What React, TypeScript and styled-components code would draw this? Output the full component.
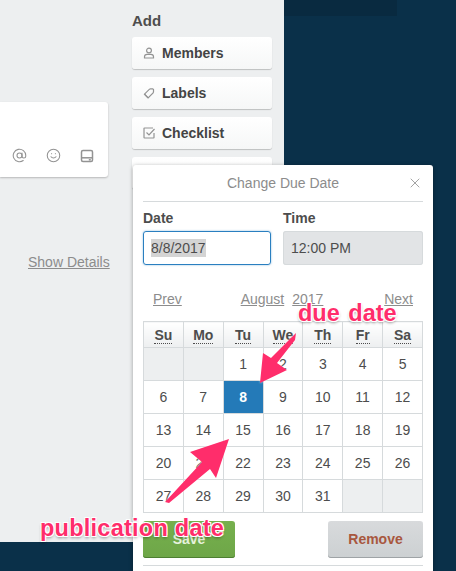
import styled, { createGlobalStyle } from "styled-components";
import { AtSign, Smile, X } from "lucide-react";

const GlobalStyle = createGlobalStyle`
  html, body {
    margin: 0;
    padding: 0;
    background: #0a3049;
    font-family: "Liberation Sans", Arial, sans-serif;
  }
`;

const weeks: (number | null)[][] = [
  [null, null, 1, 2, 3, 4, 5],
  [6, 7, 8, 9, 10, 11, 12],
  [13, 14, 15, 16, 17, 18, 19],
  [20, 21, 22, 23, 24, 25, 26],
  [27, 28, 29, 30, 31, null, null],
];
const days = ["Su", "Mo", "Tu", "We", "Th", "Fr", "Sa"];

export default function App() {
  return (
    <Page>
      <GlobalStyle />
      <Sheet>
        <MainColumn>
          <CommentBox>
            <CommentIcons>
              <AtSign size={15} strokeWidth={1.7} />
              <Smile size={15} strokeWidth={1.7} />
              <svg width="14" height="14" viewBox="0 0 14 14" fill="none" stroke="currentColor" strokeWidth="1.5">
                <rect x="1.5" y="1.5" width="11" height="11" rx="1.5" />
                <path d="M1.5 8.8h11" />
                <path d="M8.8 10.8h2" />
              </svg>
            </CommentIcons>
          </CommentBox>
          <ShowDetails>Show Details</ShowDetails>
        </MainColumn>
        <SideColumn>
          <SideTitle>Add</SideTitle>
          <SideButton>
            <svg width="12" height="12" viewBox="0 0 12 12" fill="none" stroke="currentColor" strokeWidth="1.2">
              <circle cx="6" cy="3.5" r="2.4" />
              <path d="M1.5 11v-1.2c0-1.4 1.2-2.4 2.6-2.4h3.8c1.4 0 2.6 1 2.6 2.4V11z" />
            </svg>
            Members
          </SideButton>
          <SideButton>
            <svg width="12" height="12" viewBox="0 0 12 12" fill="none" stroke="currentColor" strokeWidth="1.2">
              <path d="M1.5 7.2l5-5 1-.4h2.2l.8.8V4.8l-.4 1-5 5z" />
              <path d="M1.5 7.2l3.6 3.6" />
            </svg>
            Labels
          </SideButton>
          <SideButton>
            <svg width="12" height="12" viewBox="0 0 12 12" fill="none" stroke="currentColor" strokeWidth="1.2">
              <path d="M11 6v4.5a.5.5 0 0 1-.5.5h-9a.5.5 0 0 1-.5-.5v-9a.5.5 0 0 1 .5-.5H10" />
              <path d="M3.5 5.5L6 8l5.5-6" />
            </svg>
            Checklist
          </SideButton>
          <SideButton />
        </SideColumn>
      </Sheet>
      <TopStrip />

      <Popover>
        <PopHeader>
          Change Due Date
          <CloseIcon>
            <X size={16} strokeWidth={1.2} />
          </CloseIcon>
        </PopHeader>
        <Fields>
          <Field>
            <FieldLabel>Date</FieldLabel>
            <DateInput>
              <Selected>8/8/2017</Selected>
            </DateInput>
          </Field>
          <Field>
            <FieldLabel>Time</FieldLabel>
            <TimeInput>12:00 PM</TimeInput>
          </Field>
        </Fields>
        <CalNav>
          <NavLink>Prev</NavLink>
          <MonthYear>
            <NavLink>August</NavLink>
            <NavLink>2017</NavLink>
          </MonthYear>
          <NavLink>Next</NavLink>
        </CalNav>
        <Calendar>
          <thead>
            <tr>
              {days.map((d) => (
                <HeadCell key={d}>
                  <Abbr>{d}</Abbr>
                </HeadCell>
              ))}
            </tr>
          </thead>
          <tbody>
            {weeks.map((week, i) => (
              <tr key={i}>
                {week.map((n, j) => (
                  <DayCell key={j} $empty={n === null} $active={n === 8}>
                    {n}
                  </DayCell>
                ))}
              </tr>
            ))}
          </tbody>
        </Calendar>
        <Actions>
          <SaveButton>Save</SaveButton>
          <RemoveButton>Remove</RemoveButton>
        </Actions>
        <BottomRule />
      </Popover>

      <Arrows width="456" height="571" viewBox="0 0 456 571">
        <polygon
          fill="#ff2d6b"
          points="260,383 263,353 271,358 296,333 295,340 277,363 287,370"
        />
        <polygon
          fill="#ff2d6b"
          points="229,439 190,452 202,462 165,502 169,503 210,469 216,478"
        />
      </Arrows>
      <DueNote>due date</DueNote>
      <PublicationNote>publication date</PublicationNote>
    </Page>
  );
}

const Page = styled.div`
  position: relative;
  width: 456px;
  height: 571px;
  overflow: hidden;
  background: #0a3049;
`;

const Sheet = styled.div`
  display: flex;
  width: 284px;
  height: 542px;
  background: #edeff0;
`;

const TopStrip = styled.div`
  position: absolute;
  left: 284px;
  top: 0;
  width: 113px;
  height: 16px;
  background: #092a40;
`;

const MainColumn = styled.div`
  width: 108px;
  padding-top: 102px;
  margin-right: 24px;
`;

const CommentBox = styled.div`
  display: flex;
  align-items: flex-end;
  justify-content: flex-end;
  height: 75px;
  padding: 0 14px 14px 0;
  box-sizing: border-box;
  background: #fff;
  border-radius: 0 3px 3px 0;
  box-shadow: 0 1px 2px rgba(0, 0, 0, 0.23);
`;

const CommentIcons = styled.div`
  display: flex;
  align-items: center;
  gap: 19px;
  color: #939393;
`;

const ShowDetails = styled.div`
  margin: 76px 0 0 28px;
  width: 82px;
  font-size: 14px;
  line-height: 18px;
  color: #8c8c8c;
  text-decoration: underline;
  white-space: nowrap;
`;

const SideColumn = styled.div`
  display: flex;
  flex-direction: column;
  gap: 8px;
  width: 140px;
  padding-top: 12px;
`;

const SideTitle = styled.div`
  height: 17px;
  font-size: 15px;
  font-weight: 700;
  line-height: 17px;
  color: #4d4d4d;
`;

const SideButton = styled.div`
  display: flex;
  align-items: center;
  gap: 7px;
  height: 32px;
  padding-left: 11px;
  box-sizing: border-box;
  font-size: 14px;
  font-weight: 700;
  color: #444;
  background: linear-gradient(#ffffff, #f6f7f7);
  border-radius: 3px;
  box-shadow: 0 1px 1px rgba(0, 0, 0, 0.2);

  svg {
    color: #939393;
  }
`;

const Popover = styled.div`
  position: absolute;
  left: 133px;
  top: 165px;
  width: 300px;
  height: 420px;
  padding: 0 10px;
  box-sizing: border-box;
  background: #fff;
  border-radius: 3px;
  box-shadow: 0 1px 4px rgba(0, 0, 0, 0.35);
`;

const PopHeader = styled.div`
  position: relative;
  height: 36px;
  font-size: 14px;
  line-height: 36px;
  text-align: center;
  color: #8c8c8c;
  border-bottom: 1px solid #d6dadc;
`;

const CloseIcon = styled.span`
  position: absolute;
  right: 0;
  top: 10px;
  display: flex;
  color: #8c8c8c;
`;

const Fields = styled.div`
  display: flex;
  gap: 12px;
  margin-top: 8px;
`;

const Field = styled.div`
  display: flex;
  flex: 1 1 0;
  flex-direction: column;
  gap: 5px;

  &:last-child {
    flex: 0 0 140px;
  }
`;

const FieldLabel = styled.div`
  font-size: 14px;
  font-weight: 700;
  line-height: 16px;
  color: #4d4d4d;
`;

const DateInput = styled.div`
  height: 34px;
  padding-left: 7px;
  box-sizing: border-box;
  font-size: 14px;
  line-height: 32px;
  color: #4d4d4d;
  border: 1px solid #2a7fc0;
  border-radius: 3px;
  box-shadow: 0 0 2px rgba(42, 127, 192, 0.6);
`;

const Selected = styled.span`
  background: #d4d4d4;
  padding: 1px 0;
`;

const TimeInput = styled.div`
  height: 34px;
  padding-left: 8px;
  box-sizing: border-box;
  font-size: 14px;
  line-height: 34px;
  color: #4d4d4d;
  background: #e2e4e6;
  border-radius: 3px;
  box-shadow: inset 0 0 0 1px #d6dadc;
`;

const CalNav = styled.div`
  display: flex;
  align-items: center;
  justify-content: space-between;
  height: 18px;
  margin-top: 25px;
  padding: 0 10px;
`;

const MonthYear = styled.div`
  display: flex;
  gap: 8px;
  margin-right: 2px;
`;

const NavLink = styled.span`
  font-size: 14px;
  line-height: 18px;
  color: #8c8c8c;
  text-decoration: underline;
`;

const Calendar = styled.table`
  width: 280px;
  margin-top: 13px;
  table-layout: fixed;
  border-collapse: collapse;
  border: 1px solid #d6dadc;
`;

const HeadCell = styled.th`
  height: 25px;
  padding: 0;
  font-size: 14px;
  font-weight: 700;
  color: #4d4d4d;
  background: linear-gradient(#ffffff, #edeff0);
  border: 1px solid #d6dadc;
`;

const Abbr = styled.span`
  border-bottom: 1px dotted #4d4d4d;
`;

const DayCell = styled.td<{ $empty: boolean; $active: boolean }>`
  height: 32px;
  padding: 0;
  font-size: 14px;
  font-weight: ${(p) => (p.$active ? 700 : 400)};
  text-align: center;
  color: ${(p) => (p.$active ? "#fff" : "#4d4d4d")};
  background: ${(p) => (p.$active ? "#247ab8" : p.$empty ? "#edeff0" : "#fff")};
  border: 1px solid #d6dadc;
`;

const Actions = styled.div`
  display: flex;
  justify-content: space-between;
  margin-top: 8px;
`;

const ActionButton = styled.div`
  height: 37px;
  font-size: 14px;
  font-weight: 700;
  line-height: 36px;
  text-align: center;
  border-radius: 3px;
`;

const SaveButton = styled(ActionButton)`
  width: 92px;
  color: #e6f2dd;
  background: linear-gradient(#76b04d, #6ea648);
  box-shadow: inset 0 -1px 0 #4d7f32;
`;

const RemoveButton = styled(ActionButton)`
  width: 95px;
  color: #a8573e;
  background: linear-gradient(#d8dadc, #ccd0d2);
  box-shadow: inset 0 -1px 0 #9ea3a6;
`;

const BottomRule = styled.div`
  margin-top: 7px;
  border-top: 1px solid #d6dadc;
`;

const Arrows = styled.svg`
  position: absolute;
  left: 0;
  top: 0;
  filter: drop-shadow(0 0 1px rgba(255, 255, 255, 0.7));
`;

const Note = styled.div`
  position: absolute;
  font-size: 23.5px;
  font-weight: 700;
  line-height: 26px;
  color: #ff2d6b;
  white-space: nowrap;
  text-shadow: -1px -1px 0 #fff, 1px -1px 0 #fff, -1px 1px 0 #fff, 1px 1px 0 #fff,
    0 2px 3px rgba(0, 0, 0, 0.4);
`;

const DueNote = styled(Note)`
  left: 298px;
  top: 300px;
  word-spacing: 2px;
`;

const PublicationNote = styled(Note)`
  left: 40px;
  top: 515px;
  letter-spacing: 0.25px;
`;
